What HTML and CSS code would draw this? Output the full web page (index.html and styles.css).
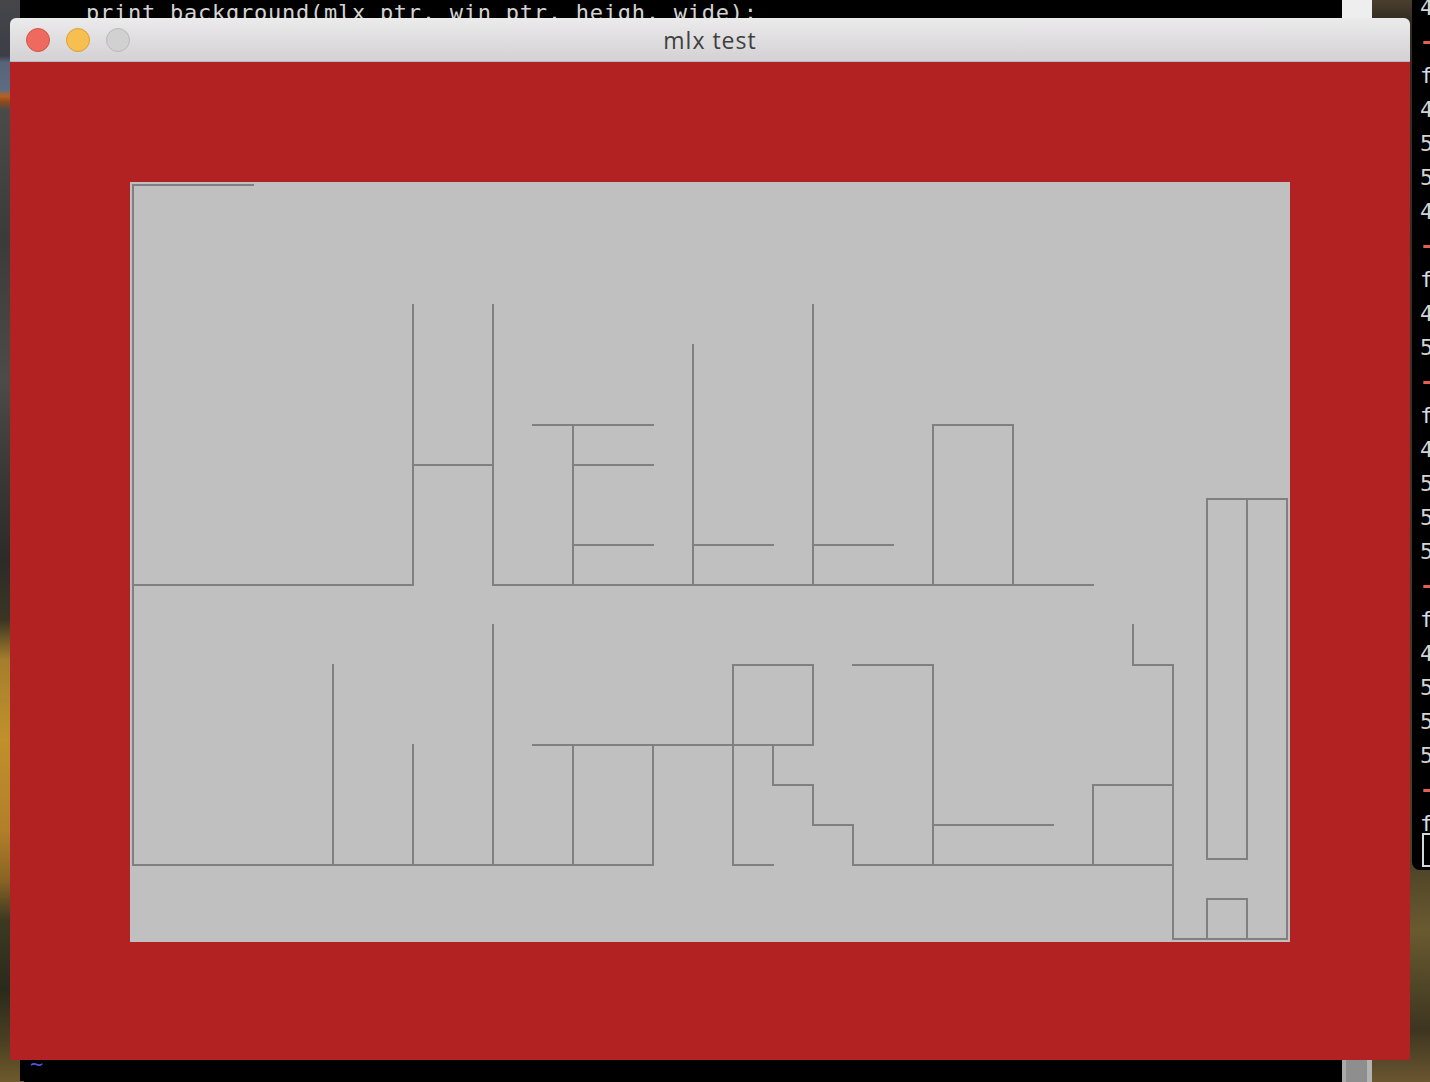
FILE: index.html
```html
<!DOCTYPE html>
<html lang="en">
<head>
<meta charset="utf-8">
<title>mlx test</title>
<link rel="stylesheet" href="styles.css">
</head>
<body>
<div class="desktop">
  <div class="term term-left">
    <div class="tline">    print_background(mlx_ptr, win_ptr, heigh, wide);</div>
    <div class="tline tilde">~</div>
  </div>
  <div class="scrollbar"><div class="thumb"></div></div>
  <div class="term term-right">
    <div class="tline">45</div>
    <div class="tline del">-</div>
    <div class="tline fn">f</div>
    <div class="tline">4</div>
    <div class="tline">5</div>
    <div class="tline">5</div>
    <div class="tline">4</div>
    <div class="tline del">-</div>
    <div class="tline fn">f</div>
    <div class="tline">4</div>
    <div class="tline">5</div>
    <div class="tline del">-</div>
    <div class="tline fn">f</div>
    <div class="tline">4</div>
    <div class="tline">5</div>
    <div class="tline">5</div>
    <div class="tline">5</div>
    <div class="tline del">-</div>
    <div class="tline fn">f</div>
    <div class="tline">4</div>
    <div class="tline">5</div>
    <div class="tline">5</div>
    <div class="tline">5</div>
    <div class="tline del">-</div>
    <div class="tline fn">f</div>
    <div class="tline"><span class="cursor"></span></div>
  </div>
  <div class="window">
    <div class="titlebar">
      <div class="lights">
        <span class="light close"></span>
        <span class="light minimize"></span>
        <span class="light zoom"></span>
      </div>
      <div class="title">mlx test</div>
      <div class="spacer"></div>
    </div>
    <div class="content">
      <div class="canvas">
        <svg class="drawing" width="1160" height="760" viewBox="0 0 1160 760" xmlns="http://www.w3.org/2000/svg">
          <g fill="none" stroke="#808080" stroke-width="2" stroke-linecap="square" stroke-linejoin="miter">
            <path d="M3 3H123"/>
            <path d="M3 3V683"/>
            <path d="M3 403H283"/>
            <path d="M283 123V403"/>
            <path d="M283 283H363"/>
            <path d="M363 123V403H963"/>
            <path d="M403 243H523"/>
            <path d="M443 243V403"/>
            <path d="M443 283H523"/>
            <path d="M443 363H523"/>
            <path d="M563 163V403"/>
            <path d="M563 363H643"/>
            <path d="M683 123V403"/>
            <path d="M683 363H763"/>
            <path d="M803 403V243H883V403"/>
            <path d="M3 683H523"/>
            <path d="M203 483V683"/>
            <path d="M283 563V683"/>
            <path d="M363 443V683"/>
            <path d="M403 563H683"/>
            <path d="M443 563V683"/>
            <path d="M523 563V683"/>
            <path d="M643 683H603V483H683V563"/>
            <path d="M643 563V603H683V643H723V683H1043"/>
            <path d="M723 483H803V683"/>
            <path d="M803 643H923"/>
            <path d="M963 683V603H1043"/>
            <path d="M1003 443V483H1043V757H1157V317H1077V677H1117V317"/>
            <path d="M1077 757V717H1117V757"/>
          </g>
        </svg>
      </div>
    </div>
  </div>
</div>
</body>
</html>
```
FILE: styles.css
```css
html, body {
  margin: 0;
  padding: 0;
}

body {
  width: 1430px;
  height: 1082px;
  overflow: hidden;
  background: #000;
}

.desktop {
  position: relative;
  width: 1430px;
  height: 1082px;
  overflow: hidden;
  background:
    linear-gradient(to bottom,
      #46464a 0px, #3c3e46 56px, #56637a 62px, #5e6c82 90px,
      #b8601f 96px, #8a4a20 102px, #4a4a48 110px, #3b3b3a 240px,
      #4d4b47 380px, #3a3936 470px, #2c2b28 560px, #3a3524 620px,
      #a57e2c 660px, #c0902c 740px, #b27f2a 830px, #8a6424 880px,
      #3c3922 920px, #2a2a1c 990px, #4a3e22 1040px, #6e5a2c 1082px)
      left top / 24px 100% no-repeat,
    linear-gradient(to bottom,
      #4a3e2e 0px, #342c22 20px, #3a3226 400px, #4c4226 860px,
      #6a5a30 930px, #4e4426 990px, #3e3520 1030px, #6a5630 1082px)
      right top / 62px 100% no-repeat,
    #000;
}

/* ---------- terminals behind ---------- */
.term {
  position: absolute;
  background: #000;
  color: #d4d4d4;
  font-family: "DejaVu Sans Mono", "Liberation Mono", monospace;
  font-size: 22px;
  letter-spacing: 0.75px;
  line-height: 34px;
  box-sizing: border-box;
  overflow: hidden;
}

.tline {
  height: 34px;
  white-space: pre;
}

.term-left {
  left: 20px;
  top: -4px;
  width: 1322px;
  height: 1085px;
  padding-left: 10px;
  display: flex;
  flex-direction: column;
  justify-content: space-between;
}

.tilde {
  color: #5252dc;
}

.scrollbar {
  position: absolute;
  left: 1342px;
  top: 0;
  width: 30px;
  height: 1082px;
  background: #eeeeee;
  display: flex;
  flex-direction: column;
  justify-content: flex-end;
}

.thumb {
  height: 300px;
  background: linear-gradient(to right, #a9a9a9 0px, #a9a9a9 4px, #8e8e8e 4px, #8e8e8e 25px, #b3b3b3 25px);
}

.term-right {
  left: 1412px;
  top: -9px;
  width: 40px;
  height: 879px;
  padding-left: 8px;
  border-bottom-left-radius: 8px;
}

.term-right .fn {
  color: #d8dce6;
}

.term-right .del {
  color: #e0605a;
  font-weight: bold;
}

.cursor {
  display: block;
  width: 14px;
  height: 34px;
  margin-top: -8px;
  margin-left: 2px;
  box-sizing: border-box;
  border: 2px solid #d6d6d6;
}

/* ---------- mlx window ---------- */
.window {
  position: absolute;
  left: 10px;
  top: 18px;
  width: 1400px;
  display: flex;
  flex-direction: column;
  border-radius: 6px 6px 2px 2px;
  overflow: hidden;
}

.titlebar {
  height: 43px;
  border-bottom: 1px solid #bab8ba;
  background: linear-gradient(to bottom, #ecebec, #d3d1d3);
  display: grid;
  grid-template-columns: 1fr auto 1fr;
  align-items: center;
  padding: 0 16px;
}

.lights {
  display: flex;
  gap: 16px;
}

.light {
  width: 24px;
  height: 24px;
  border-radius: 50%;
  box-sizing: border-box;
  border: 1px solid;
}

.light.close {
  background: #ee6a5f;
  border-color: #d5544a;
}

.light.minimize {
  background: #f6bf4f;
  border-color: #d9a13c;
}

.light.zoom {
  background: #d2d1d2;
  border-color: #bab9ba;
}

.title {
  font-family: "Open Sans", "Liberation Sans", sans-serif;
  font-size: 23px;
  letter-spacing: 1px;
  color: #404040;
  padding-top: 1px;
}

.content {
  height: 998px;
  box-sizing: border-box;
  background: #b22222;
  padding: 120px 120px 0;
}

.canvas {
  width: 1160px;
  height: 760px;
  background: #c0c0c0;
}

.drawing {
  display: block;
}
```
